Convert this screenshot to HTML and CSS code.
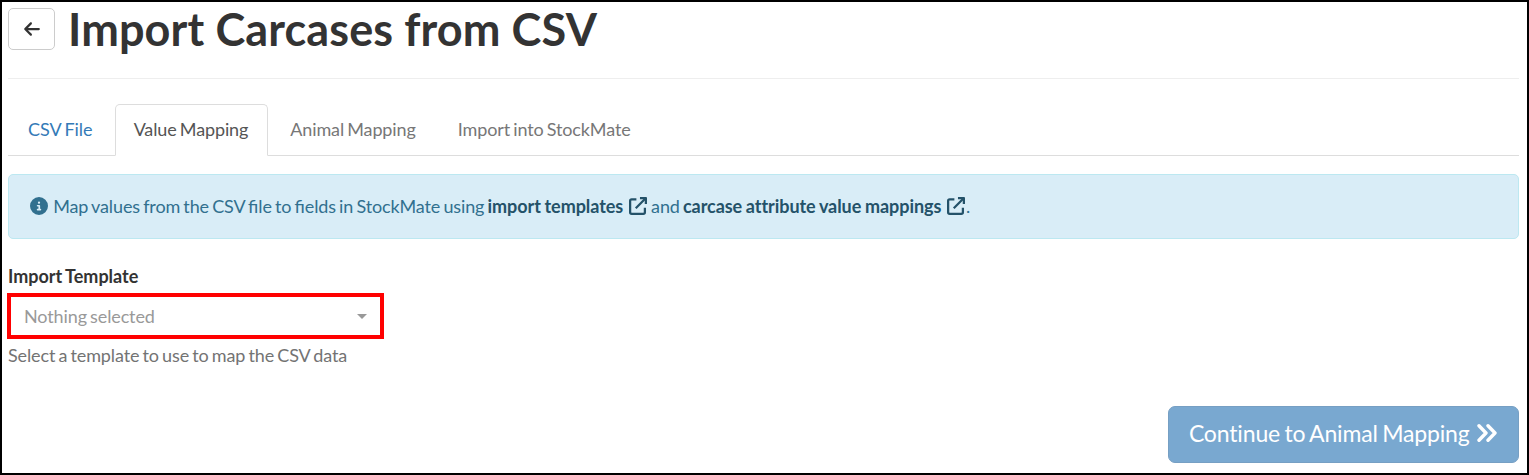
FILE: index.html
```
<!DOCTYPE html>
<html lang="en">
    <head>
        <meta charset="UTF-8">
        <meta name="viewport" content="width=device-width, initial-scale=1.0">
        <title>Import Carcases from CSV</title>
        <link rel="stylesheet" href="styles.css">
    </head>
    <body>
        <div id="container">
            <div class="page-header">
                <button type="button" class="back-button" aria-label="Back">
                    <svg class="icon-arrow" viewBox="0 0 448 512"><path d="M9.400 233.400c-12.500 12.500-12.500 32.800 0 45.300l160 160c12.500 12.500 32.800 12.500 45.300 0s12.500-32.800 0-45.300L109.200 288H416c17.700 0 32-14.300 32-32s-14.300-32-32-32H109.300l105.300-105.400c12.500-12.500 12.500-32.800 0-45.300s-32.800-12.500-45.300 0l-160 160z"/></svg>
                </button>
                <h1>Import Carcases from CSV</h1>
            </div>

            <ul class="tabs">
                <li><a href="#">CSV File</a></li>
                <li class="active"><a href="#">Value Mapping</a></li>
                <li class="disabled"><a>Animal Mapping</a></li>
                <li class="disabled"><a>Import into StockMate</a></li>
            </ul>

            <div class="alert">
                <svg class="icon info" viewBox="0 0 512 512"><path d="M256 512a256 256 0 1 0 0-512 256 256 0 1 0 0 512zm-40-176h24v-64h-24c-13.300 0-24-10.700-24-24s10.700-24 24-24h48c13.300 0 24 10.700 24 24v88h8c13.300 0 24 10.700 24 24s-10.700 24-24 24h-80c-13.300 0-24-10.700-24-24s10.700-24 24-24zm40-208a32 32 0 1 1 0 64 32 32 0 1 1 0-64z"/></svg>
                Map values from the CSV file to fields in StockMate using
                <a href="#">import templates <svg class="icon external" viewBox="0 0 512 512"><path class="stroke" d="M210 64H76a44 44 0 0 0-44 44V436a44 44 0 0 0 44 44H408a44 44 0 0 0 44-44V304M192 320L460 52"/><path d="M312 0H484a28 28 0 0 1 28 28V200H448V64H312z"/></svg></a>
                and
                <a href="#">carcase attribute value mappings <svg class="icon external" viewBox="0 0 512 512"><path class="stroke" d="M210 64H76a44 44 0 0 0-44 44V436a44 44 0 0 0 44 44H408a44 44 0 0 0 44-44V304M192 320L460 52"/><path d="M312 0H484a28 28 0 0 1 28 28V200H448V64H312z"/></svg></a>.
            </div>

            <form id="templateForm">
                <label for="templateSelect">Import Template</label>
                <button type="button" id="templateSelect">
                    <span>Nothing selected</span>
                    <span class="caret"></span>
                </button>
                <p class="help">Select a template to use to map the CSV data</p>
                <div class="button-container">
                    <button type="submit" id="continueButton" disabled>Continue to Animal Mapping <svg class="icon-next" viewBox="0 0 20 18"><path d="M2 1.800L9 9 2 16.200M11 1.800L18 9l-7 7.200"/></svg></button>
                </div>
            </form>
        </div>
    </body>
</html>
```

FILE: styles.css
```
* {
    box-sizing: border-box;
}

body {
    font-family: Lato, sans-serif;
    font-size: 18px;
    line-height: 26px;
    letter-spacing: -0.12px;
    word-spacing: -1.3px;
    font-feature-settings: "liga" 1;
    color: #333;
    background-color: white;
    margin: 0;
}

#container {
    height: 475px;
    padding: 6px 8px 0 6px;
    border: 2px solid black;
}

svg {
    fill: currentColor;
}

button {
    font-family: inherit;
    font-size: inherit;
    letter-spacing: inherit;
    word-spacing: inherit;
}

.page-header {
    display: flex;
    align-items: flex-start;
    gap: 13px;
    height: 71px;
    border-bottom: 1px solid #eee;
}

.back-button {
    display: flex;
    align-items: center;
    justify-content: center;
    width: 47px;
    height: 42px;
    padding: 0;
    color: #333;
    background-color: white;
    border: 1px solid #ccc;
    border-radius: 5px;
}

.icon-arrow {
    width: 16px;
    height: 18px;
}

h1 {
    margin: -4px 0 0;
    font-size: 45px;
    line-height: 51px;
    font-weight: bold;
    letter-spacing: 0.12px;
    word-spacing: 0;
}

.tabs {
    display: flex;
    gap: 2px;
    height: 52px;
    margin: 25px 0 18px;
    padding: 0;
    list-style: none;
    border-bottom: 1px solid #ddd;
}

.tabs a {
    display: block;
    height: 52px;
    padding: 11px 19px 12px;
    color: #337ab7;
    text-decoration: none;
    border: 1px solid transparent;
    border-radius: 5px 5px 0 0;
}

.tabs li:first-child a {
    letter-spacing: 0;
}

.tabs .active a {
    padding-left: 18px;
    color: #555;
    background-color: white;
    border-color: #ddd;
    border-bottom-color: white;
}

.tabs .disabled a {
    color: #777;
}

.alert {
    height: 65px;
    padding: 18px 21px;
    color: #31708f;
    background-color: #d9edf7;
    border: 1px solid #bce8f1;
    border-radius: 5px;
}

.alert a {
    color: #245269;
    font-weight: bold;
    letter-spacing: -0.06px;
    word-spacing: -0.6px;
    font-feature-settings: normal;
    text-decoration: none;
}

.icon {
    width: 18px;
    height: 18px;
    margin-right: 1px;
    vertical-align: -2px;
}

.icon .stroke {
    fill: none;
    stroke: currentColor;
    stroke-width: 64;
}

.info {
    margin-right: 2px;
}

.external {
    margin-left: 2px;
}

#templateForm label {
    display: block;
    margin-top: 24px;
    font-weight: bold;
    letter-spacing: 0;
    word-spacing: -1px;
}

#templateSelect {
    display: flex;
    align-items: center;
    justify-content: space-between;
    width: 377px;
    height: 46px;
    margin: 4px 0 0 -1px;
    padding: 0 13px;
    color: #999;
    background-color: white;
    border: 4px solid red;
}

.caret {
    border-top: 5px solid #999;
    border-left: 5px solid transparent;
    border-right: 5px solid transparent;
}

.help {
    margin: 3px 0 0;
    color: #737373;
}

.button-container {
    display: flex;
    justify-content: flex-end;
    margin-top: 38px;
}

#continueButton {
    height: 57px;
    padding: 0 21px 3px 20px;
    font-size: 23px;
    letter-spacing: -0.16px;
    color: white;
    background-color: #337ab7;
    border: 1px solid #2e6da4;
    border-radius: 7px;
    opacity: 0.65;
}

.icon-next {
    width: 20px;
    height: 18px;
    margin-left: 3px;
    fill: none;
    stroke: currentColor;
    stroke-width: 3.4;
    stroke-linecap: round;
    stroke-linejoin: round;
}
```
